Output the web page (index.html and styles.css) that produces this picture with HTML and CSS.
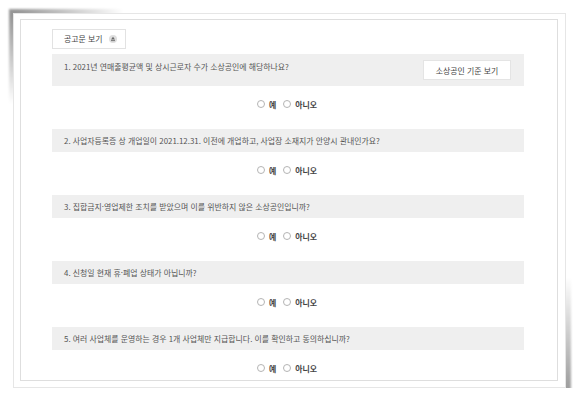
FILE: index.html
```html
<!DOCTYPE html>
<html lang="ko">
<head>
<meta charset="utf-8">
<link rel="stylesheet" href="styles.css">
</head>
<body>
<div class="stage">
<div class="shot">
  <div class="panel">
    <button class="notice-btn">공고문 보기
      <svg class="eject" width="8" height="8" viewBox="0 0 8 8"><circle cx="4" cy="4" r="4" fill="#dedede"/><polygon points="4,1.8 6,4.6 2,4.6" fill="#6a6a6a"/><rect x="2" y="5.2" width="4" height="0.9" fill="#6a6a6a"/></svg>
    </button>

    <div class="q">
      <div class="bar bar-first">
        <span class="q-text">1. 2021년 연매출평균액 및 상시근로자 수가 소상공인에 해당하나요?</span>
        <button class="std-btn">소상공인 기준 보기</button>
      </div>
      <div class="answers"><label class="opt"><span class="radio"></span>예</label><label class="opt"><span class="radio"></span>아니오</label></div>
    </div>

    <div class="q">
      <div class="bar"><span class="q-text">2. 사업자등록증 상 개업일이 2021.12.31. 이전에 개업하고, 사업장 소재지가 안양시 관내인가요?</span></div>
      <div class="answers"><label class="opt"><span class="radio"></span>예</label><label class="opt"><span class="radio"></span>아니오</label></div>
    </div>

    <div class="q">
      <div class="bar"><span class="q-text">3. 집합금지·영업제한 조치를 받았으며 이를 위반하지 않은 소상공인입니까?</span></div>
      <div class="answers"><label class="opt"><span class="radio"></span>예</label><label class="opt"><span class="radio"></span>아니오</label></div>
    </div>

    <div class="q">
      <div class="bar"><span class="q-text">4. 신청일 현재 휴·폐업 상태가 아닙니까?</span></div>
      <div class="answers"><label class="opt"><span class="radio"></span>예</label><label class="opt"><span class="radio"></span>아니오</label></div>
    </div>

    <div class="q">
      <div class="bar"><span class="q-text">5. 여러 사업체를 운영하는 경우 1개 사업체만 지급합니다. 이를 확인하고 동의하십니까?</span></div>
      <div class="answers"><label class="opt"><span class="radio"></span>예</label><label class="opt"><span class="radio"></span>아니오</label></div>
    </div>
  </div>
</div>
</div>
</body>
</html>
```
FILE: styles.css
```css
html, body {
  margin: 0;
  padding: 0;
  background: #ffffff;
}

body {
  font-family: "Noto Sans CJK KR", "Noto Sans", sans-serif;
  font-size: 7.9px;
  color: #555555;
}

.stage {
  position: relative;
  z-index: 0;
  padding: 13px 0 0 13px;
}

.shot {
  position: relative;
  box-sizing: border-box;
  width: 553px;
  padding: 5px 7px 6px 6px;
  background: #ffffff;
  border: 1px solid #e6e6e6;
}

.shot::before,
.shot::after {
  content: "";
  position: absolute;
  z-index: -1;
  filter: blur(1.2px);
}

.shot::before {
  left: -5px;
  top: -5px;
  width: 130px;
  height: 120px;
  background: radial-gradient(110px 90px at 5px 5px, rgba(0, 0, 0, 0.42), rgba(0, 0, 0, 0));
}

.shot::after {
  right: -6px;
  bottom: -6px;
  width: 300px;
  height: 200px;
  background: radial-gradient(200px 110px at calc(100% - 6px) calc(100% - 6px), rgba(0, 0, 0, 0.38), rgba(0, 0, 0, 0));
}

.panel {
  border: 1px solid #dedede;
  padding: 9px 33px 6px 31px;
}

.notice-btn {
  display: flex;
  align-items: center;
  box-sizing: border-box;
  height: 20px;
  width: 74px;
  padding: 0 0 0 11px;
  margin: 0 0 5px 0;
  background: #ffffff;
  border: 1px solid #e2e2e2;
  font-family: inherit;
  font-size: 7.9px;
  color: #444444;
  line-height: 1;
}

.eject {
  margin-left: 6px;
}

.q + .q {
  margin-top: 19px;
}

.bar {
  display: flex;
  align-items: center;
  height: 23px;
  padding: 0 12px;
  background: #efefef;
  line-height: 12px;
}

.bar-first {
  height: auto;
  align-items: flex-start;
  padding: 6px 13px 6px 12px;
}

.q-text {
  flex: 1;
  white-space: nowrap;
  color: #555555;
}

.bar-first .q-text {
  padding-top: 1px;
}

.std-btn {
  box-sizing: border-box;
  width: 88px;
  height: 20px;
  padding: 0;
  background: #ffffff;
  border: 1px solid #e4e4e4;
  font-family: inherit;
  font-size: 7.9px;
  color: #444444;
}

.answers {
  display: flex;
  justify-content: center;
  align-items: center;
  gap: 7px;
  height: 12px;
  margin-top: 12px;
  padding-right: 2px;
}

.opt {
  display: flex;
  align-items: center;
  gap: 4px;
  font-weight: bold;
  color: #444444;
}

.radio {
  box-sizing: border-box;
  width: 8px;
  height: 8px;
  border: 1px solid #b4b4b4;
  border-radius: 50%;
  background: #ffffff;
}
```
